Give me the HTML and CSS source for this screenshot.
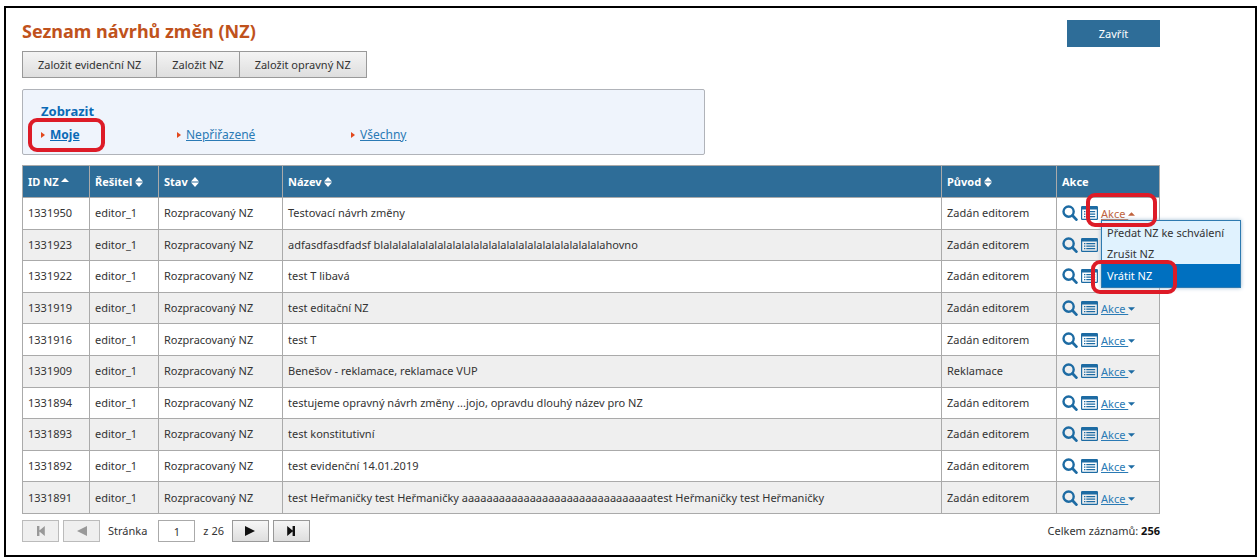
FILE: index.html
```html
<!DOCTYPE html>
<html lang="cs">
<head>
<meta charset="utf-8">
<title>Seznam návrhů změn (NZ)</title>
<link rel="stylesheet" href="styles.css">
</head>
<body>
<svg class="sprite" aria-hidden="true">
  <symbol id="search" viewBox="0 0 16 16"><circle cx="6.6" cy="6.6" r="5.1" fill="none" stroke="currentColor" stroke-width="2.4"/><path d="M10.500 10.500 14.400 14.600" stroke="currentColor" stroke-width="2.800" stroke-linecap="round"/></symbol>
  <symbol id="detail" viewBox="0 0 17 14"><path fill="currentColor" fill-rule="evenodd" d="M1.2 0h14.6q1.2 0 1.2 1.2v11.6q0 1.2-1.2 1.2H1.2Q0 14 0 12.800V1.200Q0 0 1.200 0zM1.200 3.600v9.200h14.600V3.600z"/><path fill="currentColor" d="M3 5h1.400v1.300H3zM5.300 5h8.900v1.300H5.300zM3 7.500h1.400v1.300H3zM5.300 7.500h8.900v1.300H5.300zM3 10h1.400v1.300H3zM5.300 10h8.900v1.300H5.300z"/></symbol>
  <symbol id="sort" viewBox="0 0 8 10"><path fill="currentColor" d="M4 0 8 4.400H0zM4 10 8 5.600H0z"/></symbol>
  <symbol id="up" viewBox="0 0 8 4"><path fill="currentColor" d="M4 0 8 4H0z"/></symbol>
  <symbol id="down" viewBox="0 0 8 4"><path fill="currentColor" d="M4 4 8 0H0z"/></symbol>
  <symbol id="bullet" viewBox="0 0 4 6"><path fill="currentColor" d="M0 0 4 3 0 6z"/></symbol>
  <symbol id="first" viewBox="0 0 12 12"><path fill="currentColor" d="M2 1h2.400v4.500L9.800 1v10L4.400 6.500V11H2z"/></symbol>
  <symbol id="prev" viewBox="0 0 12 12"><path fill="currentColor" d="M11 1v10L1 6z"/></symbol>
  <symbol id="next" viewBox="0 0 12 12"><path fill="currentColor" d="M1 1v10L11 6z"/></symbol>
  <symbol id="last" viewBox="0 0 12 12"><path fill="currentColor" d="M10 1H7.600v4.500L2.200 1v10l5.400-4.500V11H10z"/></symbol>
</svg>
<main class="frame">
  <header class="top">
    <div class="heading">
      <h1 class="title">Seznam návrhů změn (NZ)</h1>
      <div class="toolbar">
        <button class="tool" type="button">Založit evidenční NZ</button>
        <button class="tool" type="button">Založit NZ</button>
        <button class="tool" type="button">Založit opravný NZ</button>
      </div>
    </div>
    <button class="close" type="button">Zavřít</button>
  </header>

  <nav class="filter" aria-label="Zobrazit">
    <h2 class="filter-title">Zobrazit</h2>
    <ul class="filter-list">
      <li class="filter-item marked mark-filter"><svg class="bullet"><use href="#bullet"/></svg><a class="link current" href="#">Moje</a></li>
      <li class="filter-item"><svg class="bullet"><use href="#bullet"/></svg><a class="link" href="#">Nepřiřazené</a></li>
      <li class="filter-item"><svg class="bullet"><use href="#bullet"/></svg><a class="link" href="#">Všechny</a></li>
    </ul>
  </nav>

  <table class="grid">
    <colgroup><col class="c-id"><col class="c-user"><col class="c-state"><col><col class="c-origin"><col class="c-act"></colgroup>
    <thead>
      <tr>
        <th><button class="sort" type="button">ID NZ <svg class="caret"><use href="#up"/></svg></button></th>
        <th><button class="sort" type="button">Řešitel <svg class="both"><use href="#sort"/></svg></button></th>
        <th><button class="sort" type="button">Stav <svg class="both"><use href="#sort"/></svg></button></th>
        <th><button class="sort" type="button">Název <svg class="both"><use href="#sort"/></svg></button></th>
        <th><button class="sort" type="button">Původ <svg class="both"><use href="#sort"/></svg></button></th>
        <th>Akce</th>
      </tr>
    </thead>
    <tbody>
      <tr><td>1331950</td><td>editor_1</td><td>Rozpracovaný NZ</td><td>Testovací návrh změny</td><td>Zadán editorem</td><td>
        <div class="actions"><svg class="search"><use href="#search"/></svg><svg class="detail"><use href="#detail"/></svg>
          <div class="menu-anchor marked mark-action"><a class="link open" href="#">Akce </a><svg class="caret open"><use href="#up"/></svg>
            <ul class="menu">
              <li><a class="menu-item" href="#">Předat NZ ke schválení</a></li>
              <li><a class="menu-item" href="#">Zrušit NZ</a></li>
              <li class="marked mark-menu"><a class="menu-item selected" href="#">Vrátit NZ</a></li>
            </ul>
          </div>
        </div></td></tr>
      <tr><td>1331923</td><td>editor_1</td><td>Rozpracovaný NZ</td><td>adfasdfasdfadsf blalalalalalalalalalalalalalalalalalalalalalalalalahovno</td><td>Zadán editorem</td><td><div class="actions"><svg class="search"><use href="#search"/></svg><svg class="detail"><use href="#detail"/></svg></div></td></tr>
      <tr><td>1331922</td><td>editor_1</td><td>Rozpracovaný NZ</td><td>test T libavá</td><td>Zadán editorem</td><td><div class="actions"><svg class="search"><use href="#search"/></svg><svg class="detail"><use href="#detail"/></svg></div></td></tr>
      <tr><td>1331919</td><td>editor_1</td><td>Rozpracovaný NZ</td><td>test editační NZ</td><td>Zadán editorem</td><td><div class="actions"><svg class="search"><use href="#search"/></svg><svg class="detail"><use href="#detail"/></svg><div class="menu-anchor"><a class="link" href="#">Akce </a><svg class="caret"><use href="#down"/></svg></div></div></td></tr>
      <tr><td>1331916</td><td>editor_1</td><td>Rozpracovaný NZ</td><td>test T</td><td>Zadán editorem</td><td><div class="actions"><svg class="search"><use href="#search"/></svg><svg class="detail"><use href="#detail"/></svg><div class="menu-anchor"><a class="link" href="#">Akce </a><svg class="caret"><use href="#down"/></svg></div></div></td></tr>
      <tr><td>1331909</td><td>editor_1</td><td>Rozpracovaný NZ</td><td>Benešov - reklamace, reklamace VUP</td><td>Reklamace</td><td><div class="actions"><svg class="search"><use href="#search"/></svg><svg class="detail"><use href="#detail"/></svg><div class="menu-anchor"><a class="link" href="#">Akce </a><svg class="caret"><use href="#down"/></svg></div></div></td></tr>
      <tr><td>1331894</td><td>editor_1</td><td>Rozpracovaný NZ</td><td>testujeme opravný návrh změny ...jojo, opravdu dlouhý název pro NZ</td><td>Zadán editorem</td><td><div class="actions"><svg class="search"><use href="#search"/></svg><svg class="detail"><use href="#detail"/></svg><div class="menu-anchor"><a class="link" href="#">Akce </a><svg class="caret"><use href="#down"/></svg></div></div></td></tr>
      <tr><td>1331893</td><td>editor_1</td><td>Rozpracovaný NZ</td><td>test konstitutivní</td><td>Zadán editorem</td><td><div class="actions"><svg class="search"><use href="#search"/></svg><svg class="detail"><use href="#detail"/></svg><div class="menu-anchor"><a class="link" href="#">Akce </a><svg class="caret"><use href="#down"/></svg></div></div></td></tr>
      <tr><td>1331892</td><td>editor_1</td><td>Rozpracovaný NZ</td><td>test evidenční 14.01.2019</td><td>Zadán editorem</td><td><div class="actions"><svg class="search"><use href="#search"/></svg><svg class="detail"><use href="#detail"/></svg><div class="menu-anchor"><a class="link" href="#">Akce </a><svg class="caret"><use href="#down"/></svg></div></div></td></tr>
      <tr><td>1331891</td><td>editor_1</td><td>Rozpracovaný NZ</td><td>test Heřmaničky test Heřmaničky aaaaaaaaaaaaaaaaaaaaaaaaaaaaaaatest Heřmaničky test Heřmaničky</td><td>Zadán editorem</td><td><div class="actions"><svg class="search"><use href="#search"/></svg><svg class="detail"><use href="#detail"/></svg><div class="menu-anchor"><a class="link" href="#">Akce </a><svg class="caret"><use href="#down"/></svg></div></div></td></tr>
    </tbody>
  </table>

  <footer class="footer">
    <div class="pager">
      <button class="page-btn" type="button" aria-label="První" disabled><svg class="page-icon"><use href="#first"/></svg></button>
      <button class="page-btn" type="button" aria-label="Předchozí" disabled><svg class="page-icon"><use href="#prev"/></svg></button>
      <label class="page-label" for="page">Stránka</label>
      <input class="page-input" id="page" type="text" value="1">
      <span class="page-total">z 26</span>
      <button class="page-btn" type="button" aria-label="Další"><svg class="page-icon"><use href="#next"/></svg></button>
      <button class="page-btn" type="button" aria-label="Poslední"><svg class="page-icon"><use href="#last"/></svg></button>
    </div>
    <p class="count">Celkem záznamů: <strong>256</strong></p>
  </footer>
</main>
</body>
</html>
```
FILE: styles.css
```css
*, *::after { box-sizing: border-box; }
body {
  margin: 6px 2px 2px 4px;
  background: #fff;
  color: #333;
  font: 11px/16px "Noto Sans", "Open Sans", sans-serif;
}
button, input { font: inherit; color: inherit; }
.sprite { display: none; }
.frame {
  border: 2px solid #000;
  padding: 11px 95px 13px 16px;
}
.top { display: flex; justify-content: space-between; align-items: flex-start; }
.title { margin: 0 0 8px; font-size: 18px; line-height: 24px; color: #c0521c; }
.toolbar { display: flex; }
.tool {
  height: 27px;
  padding: 0 15px;
  border: 1px solid #999;
  background: linear-gradient(#f4f4f4, #dedede);
}
.tool + .tool { margin-left: -1px; }
.close {
  width: 93px;
  height: 27px;
  margin-top: 1px;
  border: 0;
  background: #2e6d98;
  color: #fff;
}
.filter {
  width: 60%;
  margin: 11px 0 10px;
  padding: 13px 18px 11px;
  border: 1px solid #b0b3b9;
  border-radius: 2px;
  background: #eff4fc;
}
.filter-title { margin: 0 0 8px; font-size: 13px; line-height: 16px; color: #0a6ab6; }
.filter-list {
  display: grid;
  grid-template-columns: 136px 174px 1fr;
  margin: 0;
  padding: 0;
  list-style: none;
  font-size: 12px;
}
.filter-item { display: flex; align-items: center; gap: 5px; }
.bullet { width: 4px; height: 6px; color: #e2481d; }
.link { color: #2a7ab5; text-decoration: underline; white-space: pre; }
.link.current { color: #0a6ab6; font-weight: bold; }
.open, .link.open { color: #c0623c; }

/* red highlight rings */
.marked { position: relative; }
.marked::after {
  content: "";
  position: absolute;
  z-index: 3;
  border: 4px solid #dd1b27;
  border-radius: 9px;
  pointer-events: none;
}
.mark-filter::after { left: -13px; top: -9px; width: 77px; height: 34px; }
.mark-action::after { left: -15px; top: -11px; width: 71px; height: 34px; }
.mark-menu::after { left: -11px; top: -4px; width: 86px; height: 34px; }

.grid {
  width: 100%;
  height: 349px;
  border-collapse: collapse;
  table-layout: fixed;
}
.c-id { width: 67px; }
.c-user { width: 69px; }
.c-state { width: 124px; }
.c-origin { width: 115px; }
.c-act { width: 103px; }
.grid th, .grid td { border: 1px solid #aaa; padding: 0 5px; text-align: left; }
.grid th { height: 32px; background: #2e6d98; color: #fff; }
.grid td { height: 31px; }
.grid tbody tr:nth-child(even) { background: #efefef; }
.sort { padding: 0; border: 0; background: none; font-weight: bold; white-space: nowrap; }
.both { width: 8px; height: 10px; vertical-align: -1px; }
.caret { width: 8px; height: 4px; vertical-align: 2px; }
.sort .caret { vertical-align: 4px; }
.actions { display: flex; align-items: center; gap: 3px; color: #1d6ba3; }
.search { width: 16px; height: 16px; }
.detail { width: 17px; height: 14px; }
.menu-anchor { padding-top: 2px; white-space: nowrap; }
.menu-anchor .caret { width: 7px; }
.menu {
  position: absolute;
  z-index: 2;
  left: 0;
  top: 16px;
  width: 140px;
  margin: 0;
  padding: 1px 0 0;
  border: 1px solid #2e7ab0;
  background: #e0f2fe;
  box-shadow: 0 0 4px #9ab8cf;
  list-style: none;
}
.menu-item { display: block; padding: 0 5px; line-height: 21px; color: #333; text-decoration: none; }
.menu-item.selected { background: #0070c0; color: #fff; line-height: 23px; }

.footer { display: flex; justify-content: space-between; align-items: center; margin-top: 6px; }
.pager { display: flex; align-items: center; gap: 4px; }
.page-btn {
  display: grid;
  place-items: center;
  width: 37px;
  height: 22px;
  padding: 0;
  border: 1px solid #999;
  background: linear-gradient(#f6f6f6, #dedede);
  color: #111;
}
.page-btn:disabled { background: #efefef; border-color: #bbb; color: #999; }
.page-icon { width: 12px; height: 12px; }
.page-label { padding: 0 7px 0 4px; }
.page-input { width: 37px; height: 22px; padding: 0; border: 1px solid #aaa; text-align: center; }
.page-total { padding: 0 4px; }
.count { margin: 0; }
.count strong { color: #111; }
```
